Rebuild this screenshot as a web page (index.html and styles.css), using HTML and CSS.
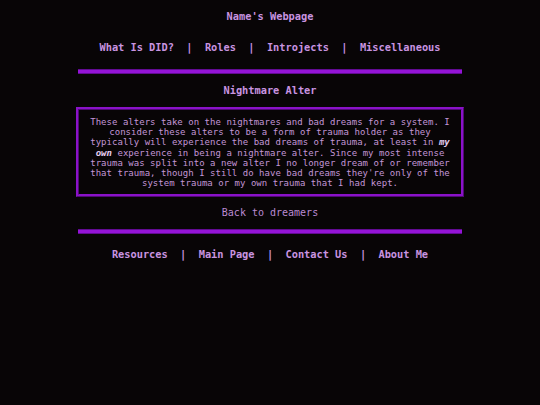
FILE: index.html
```html
<!DOCTYPE html>
<html>
<head>
<meta charset="utf-8">
<link rel="stylesheet" href="styles.css">
</head>
<body>
<div class="page">
  <div class="title">Name's Webpage</div>
  <nav class="nav top-nav">What Is DID?&nbsp;&nbsp;|&nbsp;&nbsp;Roles&nbsp;&nbsp;|&nbsp;&nbsp;Introjects&nbsp;&nbsp;|&nbsp;&nbsp;Miscellaneous</nav>
  <div class="rule rule-top"></div>
  <div class="heading">Nightmare Alter</div>
  <div class="box">
    <p>These alters take on the nightmares and bad dreams for a system. I consider these alters to be a form of trauma holder as they typically will experience the bad dreams of trauma, at least in <b><i>my own</i></b> experience in being a nightmare alter. Since my most intense trauma was split into a new alter I no longer dream of or remember that trauma, though I still do have bad dreams they're only of the system trauma or my own trauma that I had kept.</p>
  </div>
  <div class="back">Back to dreamers</div>
  <div class="rule rule-bottom"></div>
  <nav class="nav foot-nav">Resources&nbsp;&nbsp;|&nbsp;&nbsp;Main Page&nbsp;&nbsp;|&nbsp;&nbsp;Contact Us&nbsp;&nbsp;|&nbsp;&nbsp;About Me</nav>
</div>
</body>
</html>
```

FILE: styles.css
```css
html, body {
  margin: 0;
  padding: 0;
  background: #080506;
}
body {
  font-family: "DejaVu Sans Mono", monospace;
  color: #c994e0;
}
.page {
  width: 384px;
  margin: 0 auto;
  padding-top: 10px;
  text-align: center;
}
.title, .nav, .heading {
  font-size: 10.3px;
  font-weight: bold;
  line-height: 13px;
  white-space: nowrap;
}
.top-nav {
  margin-top: 18px;
}
.rule {
  height: 3px;
  background: #9414d6;
  border-top: 1px solid #620b92;
  border-bottom: 1px solid #620b92;
}
.rule-top {
  margin-top: 15px;
}
.heading {
  margin-top: 10px;
}
.box {
  margin: 10px -2px 0;
  border: 3px ridge #8a12c8;
  padding: 7px 8px 6px;
}
.box p {
  margin: 0;
  font-size: 9px;
  line-height: 10.2px;
  letter-spacing: 0.03px;
  text-align: center;
  color: #c396d6;
}
.box b {
  color: #e6cdf0;
}
.back {
  margin-top: 9px;
  font-size: 10px;
  line-height: 13px;
  color: #bb8ad2;
}
.rule-bottom {
  margin-top: 10px;
}
.foot-nav {
  margin-top: 14px;
}
```
